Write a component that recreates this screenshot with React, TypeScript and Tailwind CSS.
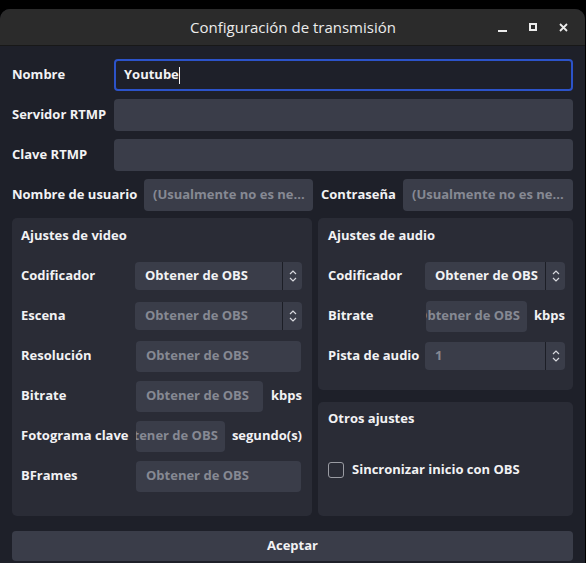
const font = { fontFamily: '"Open Sans", "Noto Sans", sans-serif' };

const Chevrons = () => (
  <svg width="10" height="14" viewBox="0 0 10 14" fill="none" stroke="#d8d9de" strokeWidth="1.2">
    <path d="M2 5 L5 2 L8 5" />
    <path d="M2 9 L5 12 L8 9" />
  </svg>
);

const Combo = ({ value, muted, w }: { value: string; muted?: boolean; w: string }) => (
  <div className={`${w} h-[28px] flex rounded-[4px] bg-[#3a3d49]`}>
    <div
      className={`flex-1 flex items-center pl-[10px] text-[13px] font-bold ${
        muted ? "text-[#868993]" : "text-[#f2f2f4]"
      }`}
    >
      {value}
    </div>
    <div className="w-[1px] bg-[#1c1e26]" />
    <div className="w-[19px] flex items-center justify-center">
      <Chevrons />
    </div>
  </div>
);

const Field = ({ w, text, end }: { w: string; text?: string; end?: boolean }) => (
  <div
    className={`${w} h-[31px] flex items-center overflow-hidden whitespace-nowrap rounded-[4px] bg-[#3a3d49] text-[13px] font-bold text-[#868993] ${
      end ? "justify-end pr-[7px]" : "pl-[10px]"
    }`}
  >
    {text}
  </div>
);

const Row = ({ label, lw, children }: { label: string; lw: string; children: React.ReactNode }) => (
  <div className="h-[40px] flex items-center">
    <div className={`${lw} shrink-0 text-[13px] font-bold text-[#f2f2f4] whitespace-nowrap`}>{label}</div>
    {children}
  </div>
);

export default function App() {
  return (
    <div className="w-[586px] h-[563px] bg-black pt-[9px] overflow-hidden" style={font}>
      <div className="h-[554px] mr-[1px] rounded-t-[10px] overflow-hidden flex flex-col bg-[#1e2029]">
        {/* title bar */}
        <div className="h-[37px] shrink-0 flex items-center relative bg-[#2b2b2b] border-b border-[#181818]">
          <div className="flex-1 text-center text-[15px] text-[#ececec] pl-[1px]">Configuración de transmisión</div>
          <div className="absolute right-[17px] top-0 h-full flex items-center gap-[22px]">
            <svg width="9" height="9" viewBox="0 0 9 9">
              <rect x="0" y="7" width="9" height="2" fill="#ececec" />
            </svg>
            <svg width="8" height="8" viewBox="0 0 8 8" fill="none" stroke="#ececec" strokeWidth="2">
              <rect x="1" y="1" width="6" height="6" />
            </svg>
            <svg width="9" height="9" viewBox="0 0 9 9" fill="none" stroke="#ececec" strokeWidth="1.8">
              <path d="M1 1 L8 8 M8 1 L1 8" />
            </svg>
          </div>
        </div>

        <div className="flex-1 flex flex-col px-[12px] pt-[13px] text-[13px] font-bold text-[#f2f2f4]">
          <div className="flex flex-col gap-[8px]">
            <div className="flex items-center h-[32px]">
              <div className="w-[102px]">Nombre</div>
              <div className="flex-1 h-[32px] flex items-center rounded-[4px] border-2 border-[#2c53c9] bg-[#1e2029] pl-[8px]">
                Youtube
                <span className="inline-block w-[1px] h-[17px] bg-[#f2f2f4]" />
              </div>
            </div>
            <div className="flex items-center h-[32px]">
              <div className="w-[102px]">Servidor RTMP</div>
              <div className="flex-1 h-[32px] rounded-[4px] bg-[#3a3d49]" />
            </div>
            <div className="flex items-center h-[32px]">
              <div className="w-[102px]">Clave RTMP</div>
              <div className="flex-1 h-[32px] rounded-[4px] bg-[#3a3d49]" />
            </div>
            <div className="flex items-center h-[32px]">
              <div className="w-[132px] whitespace-nowrap">Nombre de usuario</div>
              <div className="w-[169px] h-[32px] flex items-center pl-[9px] rounded-[4px] bg-[#3a3d49] text-[#868993] whitespace-nowrap overflow-hidden">
                (Usualmente no es ne...
              </div>
              <div className="ml-[8px] w-[82px]">Contraseña</div>
              <div className="flex-1 h-[32px] flex items-center pl-[9px] rounded-[4px] bg-[#3a3d49] text-[#868993] whitespace-nowrap overflow-hidden">
                (Usualmente no es ne...
              </div>
            </div>
          </div>

          <div className="mt-[7px] flex gap-[6px]">
            {/* video */}
            <div className="w-[300px] h-[298px] rounded-[5px] bg-[#2a2c36] pl-[9px] pr-[10px] pt-[8px]">
              <div className="h-[20px] flex items-center">Ajustes de video</div>
              <div className="mt-[10px]">
                <Row label="Codificador" lw="w-[114px]">
                  <Combo w="w-[167px]" value="Obtener de OBS" />
                </Row>
                <Row label="Escena" lw="w-[114px]">
                  <Combo w="w-[167px]" value="Obtener de OBS" muted />
                </Row>
                <Row label="Resolución" lw="w-[115px]">
                  <Field w="w-[165px]" text="Obtener de OBS" />
                </Row>
                <Row label="Bitrate" lw="w-[115px]">
                  <Field w="w-[128px]" text="Obtener de OBS" />
                  <span className="ml-[8px]">kbps</span>
                </Row>
                <Row label="Fotograma clave" lw="w-[115px]">
                  <Field w="w-[89px]" text="Obtener de OBS" end />
                  <span className="ml-[7px]">segundo(s)</span>
                </Row>
                <Row label="BFrames" lw="w-[115px]">
                  <Field w="w-[165px]" text="Obtener de OBS" />
                </Row>
              </div>
            </div>

            <div className="flex-1 flex flex-col gap-[12px]">
              {/* audio */}
              <div className="h-[172px] rounded-[5px] bg-[#2a2c36] pl-[10px] pr-[8px] pt-[8px]">
                <div className="h-[20px] flex items-center">Ajustes de audio</div>
                <div className="mt-[10px]">
                  <Row label="Codificador" lw="w-[97px]">
                    <Combo w="w-[140px]" value="Obtener de OBS" />
                  </Row>
                  <Row label="Bitrate" lw="w-[98px]">
                    <Field w="w-[101px]" text="Obtener de OBS" end />
                    <span className="ml-[7px]">kbps</span>
                  </Row>
                  <Row label="Pista de audio" lw="w-[97px]">
                    <Combo w="w-[140px]" value="1" muted />
                  </Row>
                </div>
              </div>
              {/* otros */}
              <div className="flex-1 rounded-[5px] bg-[#2a2c36] pl-[10px] pt-[7px]">
                <div className="h-[20px] flex items-center">Otros ajustes</div>
                <div className="mt-[31px] h-[20px] flex items-center gap-[8px]">
                  <div className="w-[16px] h-[16px] rounded-[3px] border-[1.5px] border-[#9a9ca3]" />
                  <span>Sincronizar inicio con OBS</span>
                </div>
              </div>
            </div>
          </div>

          <div className="mt-[15px] h-[30px] flex items-center justify-center rounded-[4px] bg-[#3a3d49]">
            Aceptar
          </div>
        </div>
      </div>
    </div>
  );
}
